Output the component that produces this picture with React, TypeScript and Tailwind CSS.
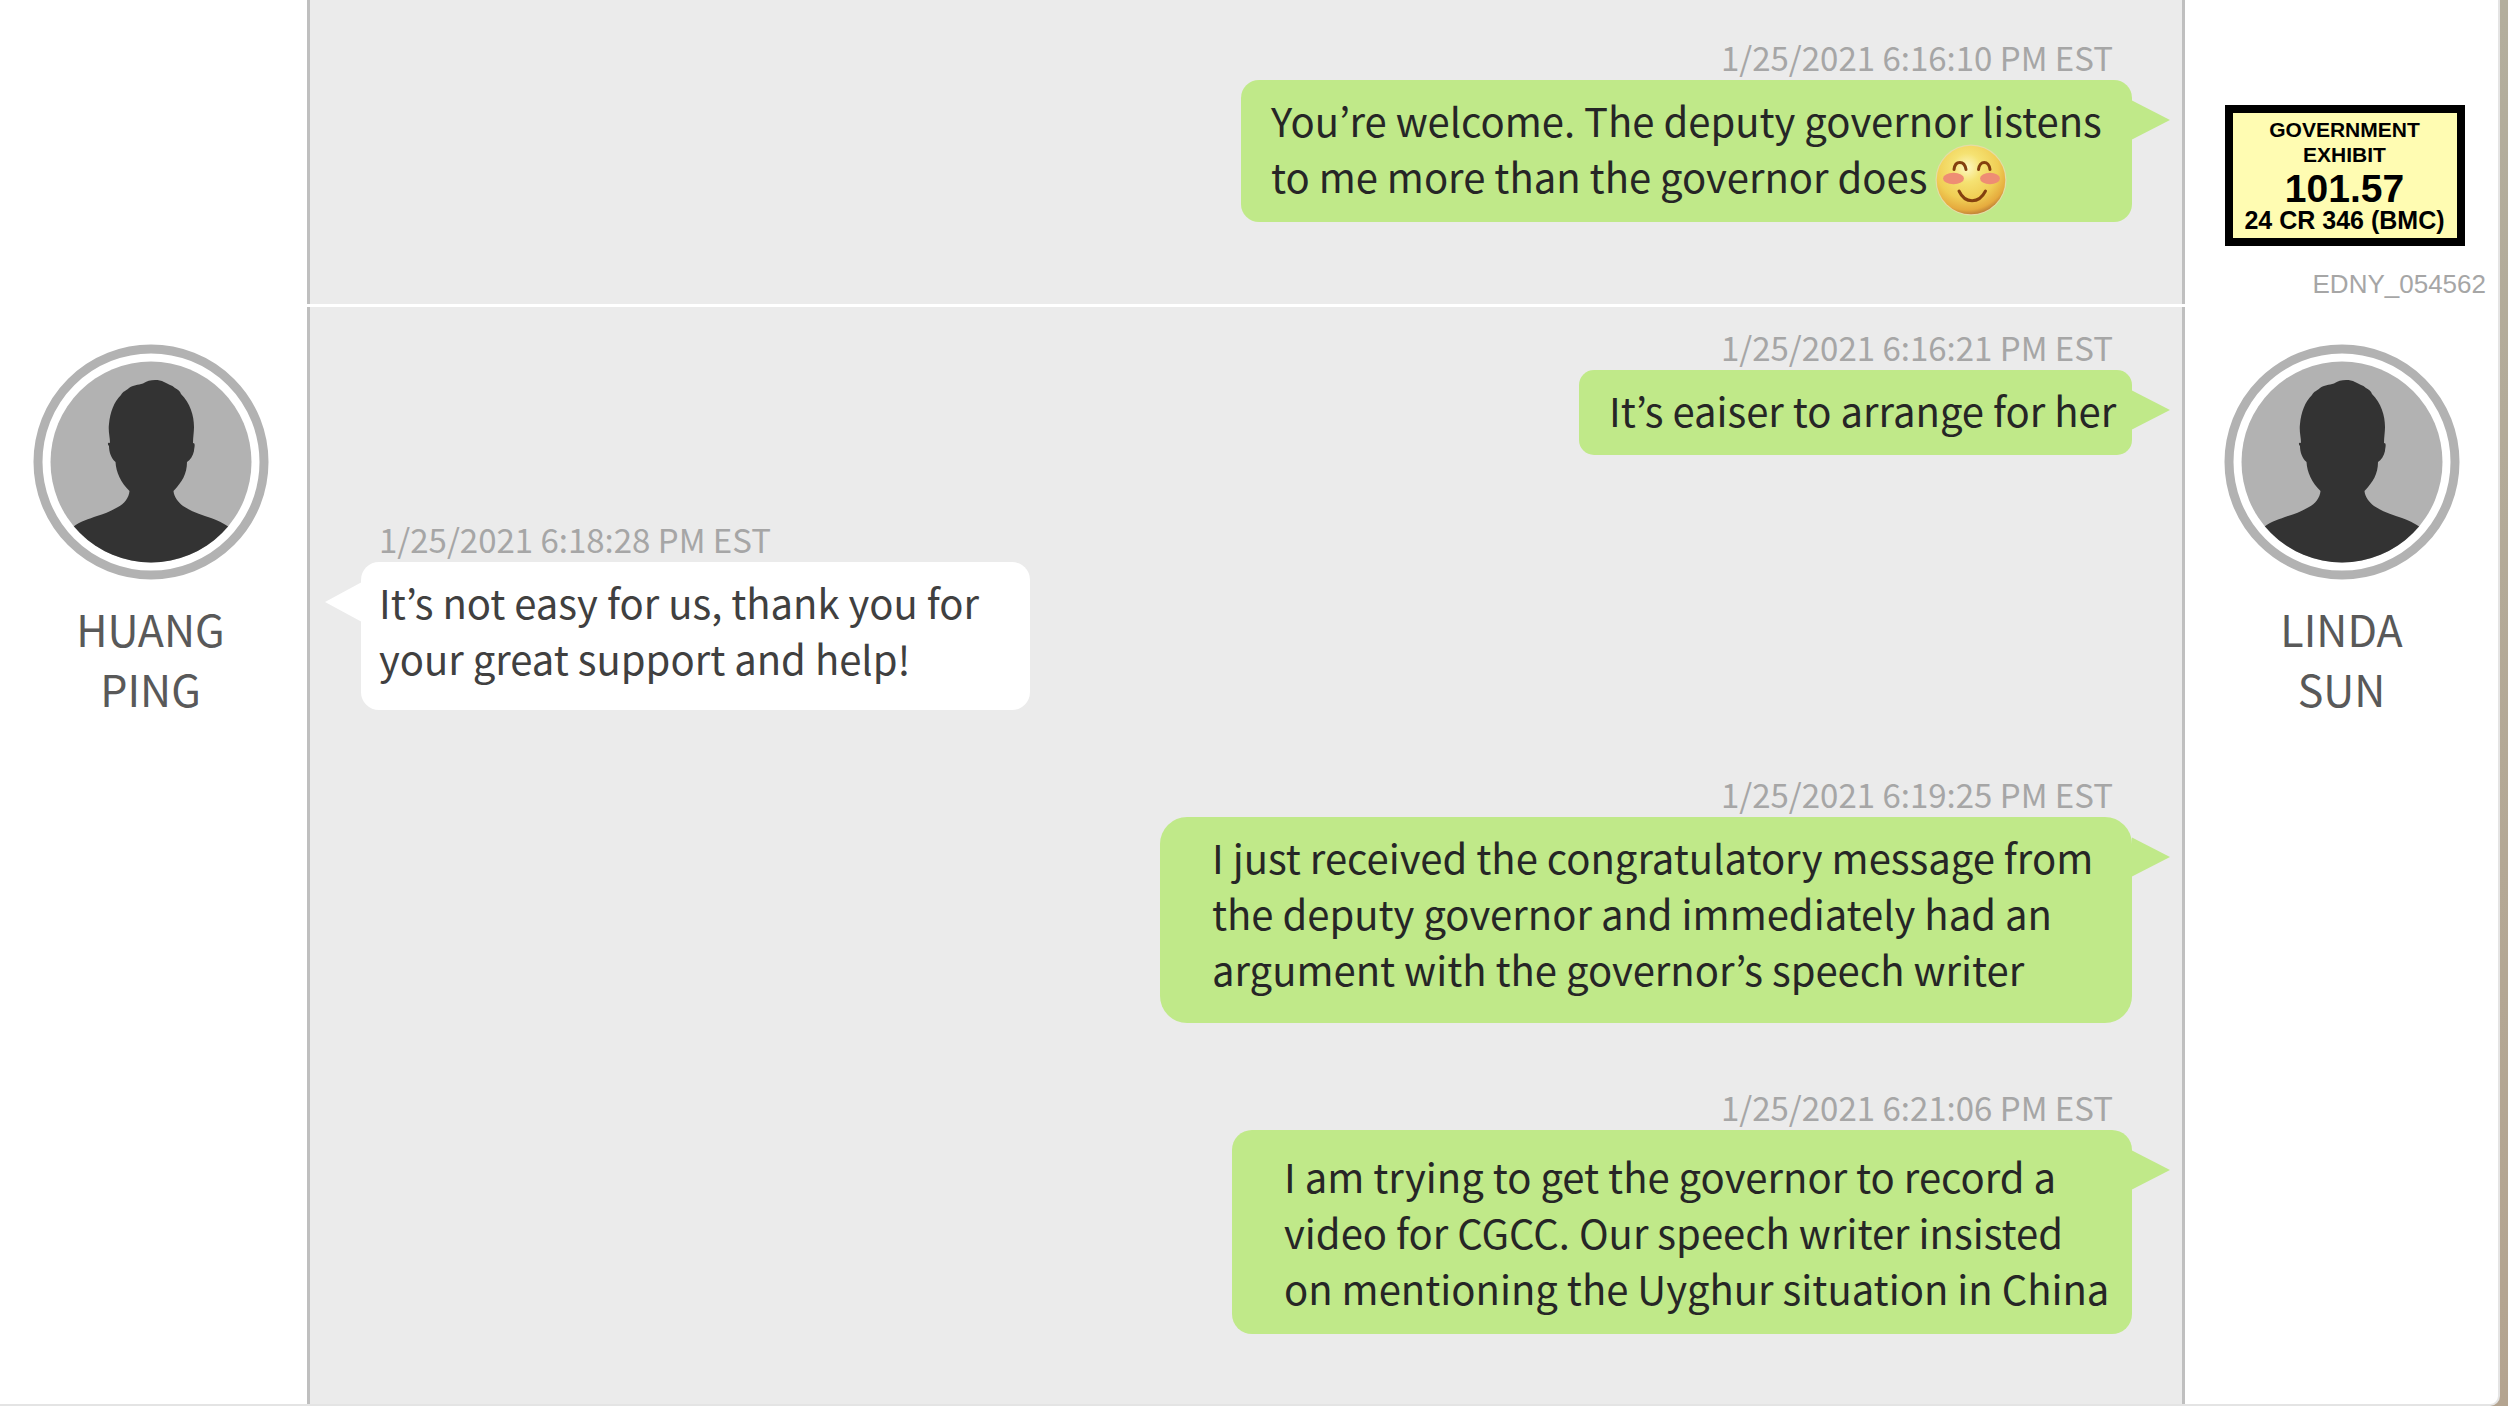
import { useId, type ReactNode } from "react";
import clsx from "clsx";

type Side = "left" | "right";

interface Message {
    time: string;
    side: Side;
    lines: string[];
    bubble: string;
    emoji?: boolean;
}

const opening: Message[] = [
    {
        time: "1/25/2021 6:16:10 PM EST",
        side: "right",
        lines: ["You’re welcome. The deputy governor listens", "to me more than the governor does"],
        bubble: "w-[891px] rounded-[18px] pt-3 pb-[18px] pl-[30px]",
        emoji: true,
    },
];

const thread: Message[] = [
    {
        time: "1/25/2021 6:16:21 PM EST",
        side: "right",
        lines: ["It’s eaiser to arrange for her"],
        bubble: "w-[553px] rounded-[15px] pt-3 pb-[17px] pl-[30px]",
    },
    {
        time: "1/25/2021 6:18:28 PM EST",
        side: "left",
        lines: ["It’s not easy for us, thank you for", "your great support and help!"],
        bubble: "w-[669px] rounded-[18px] pt-3 pb-6 pl-[18px]",
    },
    {
        time: "1/25/2021 6:19:25 PM EST",
        side: "right",
        lines: [
            "I just received the congratulatory message from",
            "the deputy governor and immediately had an",
            "argument with the governor’s speech writer",
        ],
        bubble: "w-[972px] rounded-[27px] pt-3 pb-[26px] pl-[52px]",
    },
    {
        time: "1/25/2021 6:21:06 PM EST",
        side: "right",
        lines: [
            "I am trying to get the governor to record a",
            "video for CGCC. Our speech writer insisted",
            "on mentioning the Uyghur situation in China",
        ],
        bubble: "w-[900px] rounded-[20px] pt-[18px] pb-[18px] pl-[52px]",
    },
];

function SmilingFace() {
    const id = useId();

    return (
        <svg viewBox="0 0 72 72" className="-mt-1 -mb-3 ml-2 size-[72px]" role="img" aria-label="Smiling face">
            <defs>
                <radialGradient id={`${id}-face`} cx="0.44" cy="0.32" r="0.7">
                    <stop offset="0" stopColor="#fdf8c4" />
                    <stop offset="0.3" stopColor="#f5e272" />
                    <stop offset="0.65" stopColor="#f0ce55" />
                    <stop offset="0.88" stopColor="#e6ab3e" />
                    <stop offset="1" stopColor="#b97a35" />
                </radialGradient>
            </defs>
            <circle cx="36" cy="36" r="35.5" fill="#e3dda6" />
            <circle cx="36" cy="36" r="34.3" fill={`url(#${id}-face)`} />
            <ellipse cx="18.500" cy="34.500" rx="10.500" ry="5.800" fill="#ee8d74" />
            <ellipse cx="55" cy="34.500" rx="10" ry="5.800" fill="#ee8d74" />
            <g fill="none" stroke="#84400f" strokeLinecap="round">
                <path d="M19 25.500C20 16 29.500 16 31 25.500" strokeWidth="3" />
                <path d="M43.500 25.500C44.500 16 54 16 55 25.500" strokeWidth="3" />
                <path d="M24 47C30 60 44 60 50.500 47" strokeWidth="3" />
            </g>
        </svg>
    );
}

function Bubble({ message }: { message: Message }) {
    const left = message.side === "left";

    return (
        <li className={clsx("flex flex-col", left ? "items-start" : "items-end")}>
            <time className={clsx("text-[33px] leading-[46px] text-[#a6a6a6]", left ? "pl-[18px]" : "pr-[19px]")}>
                {message.time}
            </time>
            <div
                className={clsx(
                    "relative text-[40px] leading-[56px] whitespace-nowrap",
                    left ? "bg-white text-[#404040]" : "bg-[#c0e989] text-[#262626]",
                    message.bubble
                )}
            >
                {message.lines.map((line, index) => (
                    <p key={line} className="flex items-center">
                        {line}
                        {message.emoji && index === message.lines.length - 1 && <SmilingFace />}
                    </p>
                ))}
                <svg
                    viewBox="0 0 38 40"
                    className={clsx(
                        "absolute top-5 h-10",
                        left ? "right-full w-9 -scale-x-100 fill-white" : "left-full w-[38px] fill-[#c0e989]"
                    )}
                    preserveAspectRatio="none"
                    aria-hidden="true"
                >
                    <path d="M-1 0L0 0.500L38 20L0 39.500L-1 40Z" />
                </svg>
            </div>
        </li>
    );
}

function Section({ messages, className }: { messages: Message[]; className: string }) {
    return (
        <ol
            className={clsx(
                "flex flex-col gap-[61px] border-x-[3px] border-[#bfbfbf] bg-[#ebebeb] pr-[50px] pl-[51px]",
                className
            )}
        >
            {messages.map((message) => (
                <Bubble key={message.time} message={message} />
            ))}
        </ol>
    );
}

function Person({ children }: { children: ReactNode }) {
    const id = useId();

    return (
        <figure className="flex flex-col items-center">
            <svg viewBox="0 0 236 236" className="size-[236px]" aria-hidden="true">
                <defs>
                    <clipPath id={`${id}-clip`}>
                        <circle cx="118" cy="118" r="100.500" />
                    </clipPath>
                </defs>
                <circle cx="118" cy="118" r="113" fill="white" stroke="#b2b2b2" strokeWidth="9" />
                <circle cx="118" cy="118" r="100.500" fill="#b2b2b2" />
                <path
                    clipPath={`url(#${id}-clip)`}
                    fill="#333333"
                    d="M110 39.500C116 35.500 125 35 131 38C134 40 139 41 142 44C145 45.500 147 47 148 50C157 59 161 71 161 83C161 88 160 93 160 99C163 99 161 104 161 107C160 112 157 116 154 118C154 130 149 138 140.500 147C141 153 145 158 150 162C159 168 169 171 178 174C184 176 190 179 196 183L196 230L40 230L40 183C47 177 56 175 64 172C71 170 78 167 85 163C91 160 96 154 96.500 147C88 139 83 128 82.500 118C78 114 76 108 76 102C74 100 75 98 77 99C77 93 75 87 76 80C77 68 81 58 88 51C90 47 93 47 96 44C100 41 105 41 110 39.500Z"
                />
            </svg>
            <figcaption className="mt-[18px] text-center text-[43px] leading-[60px] text-[#595959]">{children}</figcaption>
        </figure>
    );
}

function ExhibitSticker() {
    return (
        <div className="w-60 border-8 border-black bg-[#fffcb2] pt-1 pb-2 text-center font-bold whitespace-nowrap text-black">
            <p className="text-[21px] leading-[25px]">GOVERNMENT</p>
            <p className="text-[21px] leading-[25px]">EXHIBIT</p>
            <p className="text-[39px] leading-[43px]">101.57</p>
            <p className="flex justify-center text-[25px] leading-5">24 CR 346 (BMC)</p>
        </div>
    );
}

export default function App() {
    return (
        <div className="min-h-screen bg-linear-to-b from-[#b3ae9d] to-[#b4a490] pr-2 font-['Noto_Sans_CJK_KR',sans-serif]">
            <main className="flex min-h-screen rounded-br-[10px] border-r-2 border-b-2 border-[#e4e4e4] bg-white">
                <aside className="w-[307px] shrink-0 pt-[344px] pr-1.5">
                    <Person>
                        HUANG
                        <br />
                        PING
                    </Person>
                </aside>

                <div className="flex grow flex-col">
                    <Section messages={opening} className="pt-[34px] pb-[82px]" />
                    <div className="h-[3px] bg-white" />
                    <Section messages={thread} className="grow pt-[17px] pb-16" />
                </div>

                <aside className="flex w-[313px] shrink-0 flex-col pt-[105px]">
                    <div className="flex flex-col items-center pl-1.5 font-['Liberation_Sans',Arial,sans-serif]">
                        <ExhibitSticker />
                        <p className="mt-[23px] mb-[45px] self-end pr-3 text-[26px] leading-[30px] text-[#a6a6a6]">EDNY_054562</p>
                    </div>
                    <Person>
                        LINDA
                        <br />
                        SUN
                    </Person>
                </aside>
            </main>
        </div>
    );
}
